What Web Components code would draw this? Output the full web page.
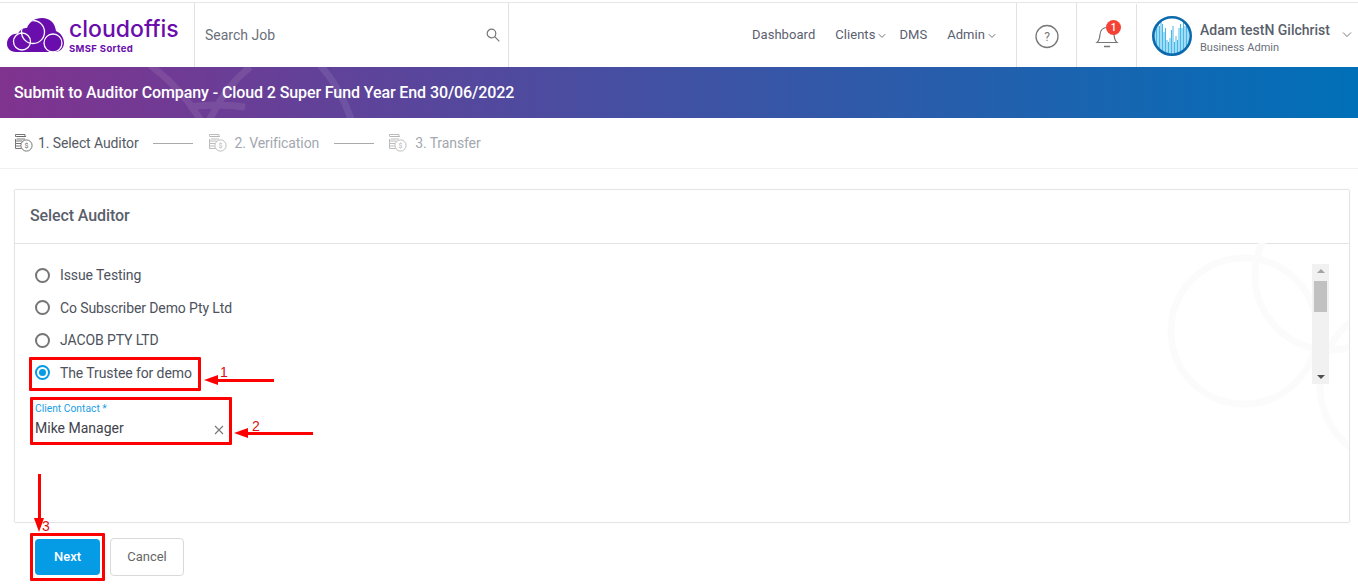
<!DOCTYPE html>
<html lang="en"><head><meta charset="utf-8"><title>Submit to Auditor</title>
<style>
html,body{margin:0;padding:0;background:#fff;height:584px;overflow:hidden}
body{font-family:Roboto,"Liberation Sans",sans-serif;position:relative}
</style></head><body>
<app-header></app-header>
<page-banner>Submit to Auditor Company - Cloud 2 Super Fund Year End 30/06/2022</page-banner>
<step-bar>
  <step-item active>1. Select Auditor</step-item>
  <step-item>2. Verification</step-item>
  <step-item>3. Transfer</step-item>
</step-bar>
<auditor-card heading="Select Auditor">
  <radio-row>Issue Testing</radio-row>
  <radio-row>Co Subscriber Demo Pty Ltd</radio-row>
  <radio-row>JACOB PTY LTD</radio-row>
  <radio-row checked>The Trustee for demo</radio-row>
  <contact-field slot="field" label="Client Contact *" value="Mike Manager"></contact-field>
</auditor-card>
<form-actions></form-actions>
<mark-box style="left:29px;top:357px;width:172px;height:34px"></mark-box>
<mark-box style="left:30px;top:397px;width:202px;height:48px"></mark-box>
<mark-box style="left:30px;top:533px;width:75px;height:48px"></mark-box>
<mark-arrow dir="left" style="left:204px;top:375px;width:70px" num="1"></mark-arrow>
<mark-arrow dir="left" style="left:234px;top:428px;width:79px" num="2"></mark-arrow>
<mark-arrow dir="down" style="left:34px;top:474px;height:58px" num="3"></mark-arrow>
<script>
function def(name, css, html){
  customElements.define(name, class extends HTMLElement{
    constructor(){super();this.attachShadow({mode:'open'});}
    connectedCallback(){
      const h = typeof html==='function'?html(this):html;
      this.shadowRoot.innerHTML='<style>'+css+'</style>'+h;
    }
  });
}
const chev='<svg width="8" height="6" viewBox="0 0 8 6" fill="none" stroke="#777" stroke-width="1"><path d="M.8 1.2 4 4.4l3.2-3.2"/></svg>';
const coin=c=>`<svg width="19" height="19" viewBox="0 0 19 19" fill="none" stroke="${c}" stroke-width=".9"><path d="M1.5 1.5h9.5v2H1.500zM3 3.500h9M2.500 6h8.500M1.500 6v2h7M1.500 8v2.500h5.500M1.500 10.500v2.500h5M1.500 13v2.500h6"/><circle cx="12.500" cy="12.500" r="5.600"/><text x="12.500" y="15" font-size="7" font-family="Roboto" fill="${c}" stroke="none" text-anchor="middle">$</text></svg>`;
def('app-header',`
:host{display:flex;height:64px;margin-top:2px;border-top:1px solid #e6e6e6;background:#fff;color:#5a6070;font-size:13px}
.logo{width:195px;flex:none;box-sizing:border-box;border-right:1px solid #e2e2e2;position:relative;display:flex;padding:15px 0 0 7px;gap:4px}
.words{color:#6a0dad;line-height:1}
.brand{font:500 23px/26px Inter,Lato,sans-serif;letter-spacing:0;margin-top:-2px;white-space:nowrap}
.tag{font:700 9.500px/10px Inter,Roboto,sans-serif;letter-spacing:.35px;margin-top:2px}
.search{width:314px;flex:none;box-sizing:border-box;border-right:1px solid #e2e2e2;display:flex;align-items:center;justify-content:space-between;padding:0 8px 0 10px;font-size:14px;color:#6a6f7a}
nav{flex:1;display:flex;justify-content:flex-end;align-items:center;padding:0 20px 2px 0;letter-spacing:.05px}
nav span{display:flex;align-items:center;gap:3px}
nav svg{margin-top:3px}
.cell{width:60px;box-sizing:border-box;flex:none;border-left:1px solid #e2e2e2;display:flex;align-items:center;justify-content:center;position:relative}
.badge{position:absolute;left:29px;top:17px;width:15px;height:15px;border-radius:50%;background:#f44336;color:#fff;font:500 10px/15px Roboto;text-align:center}
.user{width:222px;flex:none;border-left:1px solid #e2e2e2;display:flex;align-items:center;padding-left:15px;box-sizing:border-box;position:relative;margin-top:1px}
.who{margin-left:8px;padding-top:5px}
.name{font-size:14px;line-height:18px;color:#5a5f6b;font-weight:500;margin-bottom:2px}
.role{font-size:11px;line-height:14px;color:#6a6f7a}
.user>svg.c{position:absolute;left:205px;top:27px}
`,`
<div class="logo">
<svg width="58" height="35" viewBox="0 0 58 35" style="flex:none"><defs><clipPath id="cl"><path d="M9 34C3 34 0 30 0 26 0 20 5 15 11 16 13 11 17 10 20 10 22 4 28 0 35 0 43 0 48 5 49 13 54 15 57 20 57 25 57 30 53 34 48 34Z"/></clipPath></defs><path fill="#6a0dad" d="M9 34C3 34 0 30 0 26 0 20 5 15 11 16 13 11 17 10 20 10 22 4 28 0 35 0 43 0 48 5 49 13 54 15 57 20 57 25 57 30 53 34 48 34Z"/><g clip-path="url(#cl)" fill="none" stroke="#fff" stroke-width="1.300"><circle cx="15" cy="23.500" r="8.500"/><circle cx="26" cy="14" r="11.500"/><circle cx="46" cy="25" r="9"/></g></svg>
<div class="words"><div class="brand">cloudoffis</div><div class="tag">SMSF Sorted</div></div>
</div>
<div class="search"><span>Search Job</span><svg width="14" height="14" viewBox="0 0 14 14" fill="none" stroke="#777" stroke-width="1.200"><circle cx="5.500" cy="5.500" r="4.300"/><path d="m8.700 8.700 4.600 4.600"/></svg></div>
<nav><span>Dashboard</span><span style="margin-left:20px">Clients ${chev}</span><span style="margin-left:13px">DMS</span><span style="margin-left:20px">Admin ${chev}</span></nav>
<div class="cell"><svg width="26" height="26" viewBox="0 0 26 26" style="margin-top:3px"><circle cx="13" cy="12.500" r="11" fill="none" stroke="#777" stroke-width="1.300"/><text x="13" y="17" text-anchor="middle" font-family="Roboto" font-size="12" fill="#777">?</text></svg></div>
<div class="cell"><svg width="24" height="26" viewBox="0 0 24 26" fill="none" stroke="#777" stroke-width="1.200" style="margin-top:3px"><path d="M2 18.500c2.500-2 2.500-4 3-8C5.500 6 8 3.500 12 3.500s6.500 2.500 7 7c.5 4 .5 6 3 8Z"/><path d="M9 22.500h6" stroke-width="1.500"/></svg><div class="badge">1</div></div>
<div class="user">
<svg width="40" height="40" viewBox="0 0 40 40" style="flex:none"><defs><clipPath id="av"><circle cx="20" cy="20" r="18"/></clipPath></defs><circle cx="20" cy="20" r="18" fill="#fff"/><g clip-path="url(#av)" stroke="#2fb0e8" stroke-width=".9" fill="none"><path d="M3 6v30M4.500 4v34M6 6v32M7.500 10v28M9 6v32M10.500 8v30M12 16v22M13.500 12v26M15 24v14M16.500 26v12M18 22v16M19.500 14v24M21 10v28M22.500 26v12M24 20v18M25.500 24v14M27 12v26M28.500 8v30M30 12v26M31.500 6v30M33 10v28M34.500 8v26M36 10v22"/></g><circle cx="20" cy="20" r="18.700" fill="none" stroke="#0b69ae" stroke-width="2.600"/></svg>
<div class="who"><div class="name">Adam testN Gilchrist</div><div class="role">Business Admin</div></div>
<svg class="c" width="10" height="7" viewBox="0 0 10 7" fill="none" stroke="#777"><path d="m1 1.500 4 4 4-4"/></svg>
</div>`);
def('page-banner',`
:host{display:flex;align-items:center;height:51px;box-sizing:border-box;padding-left:14px;position:relative;overflow:hidden;background:linear-gradient(90deg,#80338f 0%,#0070b8 100%);color:#fff;font-size:16px;font-weight:500;letter-spacing:-.1px}
svg{position:absolute;left:0;top:0}
span{position:relative}
`,`<svg width="500" height="51" fill="none" stroke="#fff" stroke-opacity=".09" stroke-width="7"><path d="M150-2Q180 20 200 52M210 52Q225 20 250 0M320-2Q340 20 351 52M190 40Q215 36 245 40"/></svg><span><slot></slot></span>`);
def('step-bar',`
:host{display:flex;align-items:center;height:51px;box-sizing:border-box;padding:0 0 1px 14px;border-bottom:1px solid #f0f0f0;font-size:14px;letter-spacing:-.1px}
`,`<slot></slot>`);
def('step-item',`
:host{display:flex;align-items:center;color:#a3a7af;gap:8px}
:host([active]){color:#555a64;gap:5px}
:host(:not(:last-child))::after{content:"";width:40px;height:1px;background:#aaa;margin:1px 14px 0 7px}
:host([active])::after{margin:1px 15px 0 9px}
`,el=>coin(el.hasAttribute('active')?'#666':'#b5b5b5')+'<slot></slot>');
def('auditor-card',`
:host{display:block;height:334px;box-sizing:border-box;margin:20px 8px 0 14px;border:1px solid #e4e4e4;border-radius:2px;position:relative;overflow:hidden;box-shadow:0 0 2px rgba(0,0,0,.04)}
h2{margin:0;height:54px;box-sizing:border-box;border-bottom:1px solid #e4e4e4;padding:0 15px;font:500 16px/52px Roboto;letter-spacing:-.1px;color:#5a5f6b}
.wm{position:absolute;right:-1px;top:53px}
.body{display:flex;height:120px;margin:20px 20px 0 20px;position:relative}
.list{flex:1;overflow:hidden}
.in{margin-top:-5.200px}
.sb{width:17px;background:#f1f1f1;position:relative;flex:none}
.sb i{position:absolute;left:2px;top:17px;width:13px;height:31px;background:#c1c1c1}
.sb b{position:absolute;left:4.500px;width:0;height:0;border:4px solid transparent}
.sb .u{top:5px;border-top:0;border-bottom:4px solid #a3a3a3}
.sb .d{bottom:5px;border-bottom:0;border-top:4px solid #505050}
.field{padding-left:20px;position:relative;margin-top:19px}
`,el=>`<h2>${el.getAttribute('heading')}</h2>
<svg class="wm" width="190" height="280" fill="none" stroke="#fbfbfb" stroke-width="7"><circle cx="84" cy="88" r="73"/><circle cx="170" cy="32" r="75"/><circle cx="240" cy="142" r="80"/></svg>
<div class="body"><div class="list"><div class="in"><slot></slot></div></div><div class="sb"><b class="u"></b><i></i><b class="d"></b></div></div>
<div class="field"><slot name="field"></slot></div>`);
def('radio-row',`
:host{display:flex;align-items:center;height:32.600px;gap:10px;color:#4d525c;font-size:14px;letter-spacing:-.1px}
i{width:15px;height:15px;box-sizing:border-box;border:2px solid #757575;border-radius:50%;display:block;flex:none;position:relative}
:host([checked]) i{border-color:#059be5}
:host([checked]) i::after{content:"";position:absolute;left:2px;top:2px;width:7px;height:7px;border-radius:50%;background:#059be5}
`,`<i></i><slot></slot>`);
def('contact-field',`
:host{display:block;width:192px;color:#3f434c}
label{display:block;font-size:10.300px;line-height:12px;color:#1aa0e4}
.v{display:flex;justify-content:space-between;align-items:center;font-size:14px;line-height:20px;margin-top:3px;padding-right:3px}
svg{margin-top:3px}
`,el=>`<label>${el.getAttribute('label')}</label><div class="v"><span>${el.getAttribute('value')}</span><svg width="10" height="10" viewBox="0 0 10 10" stroke="#777" stroke-width="1.100"><path d="m1 1 8 8M9 1 1 9"/></svg></div>`);
def('form-actions',`
:host{display:flex;gap:10px;margin:16px 0 0 35px;align-items:center;height:36px}
button{height:36px;border-radius:4px;font:500 13px Roboto;padding:0 0 2px;cursor:pointer}
.n{width:65px;border:0;background:#059be5;color:#fff}
.c{width:74px;height:38px;background:#fff;border:1px solid #d9d9d9;color:#666;font-weight:400}
`,`<button class="n">Next</button><button class="c">Cancel</button>`);
def('mark-box',`:host{display:block;position:absolute;box-sizing:border-box;border:3px solid #f00;border-radius:1px}`,``);
def('mark-arrow',`
:host{display:block;position:absolute;color:#e01010;font:14px/14px "Liberation Sans",sans-serif}
:host([dir=left]){height:10px}
:host([dir=down]){width:12px}
.l{position:absolute;background:#f00}
.h{position:absolute;width:0;height:0}
span{position:absolute}
`,el=>{const n=el.getAttribute('num');
 return el.getAttribute('dir')==='left'
 ?`<div class="h" style="left:0;top:0;border:5px solid transparent;border-left:0;border-right:14px solid #f00"></div><div class="l" style="left:12px;right:0;top:3.500px;height:3px"></div><span style="left:${n==='1'?16:18}px;top:${n==='1'?-10:-9}px">${n}</span>`
 :`<div class="l" style="left:4px;top:0;bottom:10px;width:3px"></div><div class="h" style="left:0;bottom:0;border:5.500px solid transparent;border-bottom:0;border-top:14px solid #f00"></div><span style="left:8px;top:45px">${n}</span>`;});
</script>
</body></html>
